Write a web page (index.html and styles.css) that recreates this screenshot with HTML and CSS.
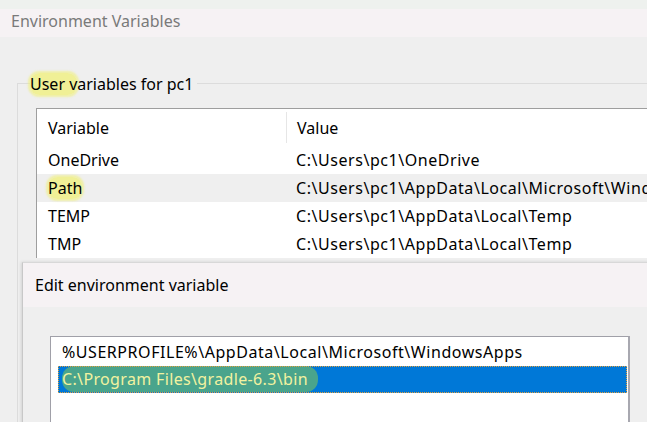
FILE: index.html
```html
<!DOCTYPE html>
<html>
<head>
<meta charset="utf-8">
<link rel="stylesheet" href="styles.css">
</head>
<body>
<div class="desk">
  <div class="win main">
    <div class="strip"></div>
    <div class="titlebar"><span class="title">Environment Variables</span></div>
    <div class="body">
      <fieldset class="group">
        <legend class="legend"><span class="hl-y">User v</span>ariables for pc1</legend>
        <div class="listview">
          <div class="lv-head">
            <div class="c1">Variable</div>
            <div class="c2 sep">Value</div>
          </div>
          <div class="lv-row"><div class="c1">OneDrive</div><div class="c2 path">C:\Users\pc1\OneDrive</div></div>
          <div class="lv-row sel"><div class="c1"><span class="hl-y">Path</span></div><div class="c2 path">C:\Users\pc1\AppData\Local\Microsoft\WindowsApps</div></div>
          <div class="lv-row"><div class="c1">TEMP</div><div class="c2 path">C:\Users\pc1\AppData\Local\Temp</div></div>
          <div class="lv-row"><div class="c1">TMP</div><div class="c2 path">C:\Users\pc1\AppData\Local\Temp</div></div>
        </div>
      </fieldset>
    </div>
  </div>

  <div class="win edit">
    <div class="titlebar2"><span class="title2">Edit environment variable</span></div>
    <div class="body2">
      <div class="listbox">
        <div class="lb-item path">%USERPROFILE%\AppData\Local\Microsoft\WindowsApps</div>
        <div class="lb-item active"><span class="hl-g">C:\Program Files\gradle-6.3\bin</span></div>
      </div>
    </div>
  </div>
</div>
</body>
</html>
```
FILE: styles.css
```css
html, body {
  margin: 0;
  padding: 0;
  width: 647px;
  height: 422px;
  overflow: hidden;
  background: #efefef;
  font-family: "Noto Sans", "Open Sans", sans-serif;
  font-size: 16px;
  color: #000;
}
.desk {
  position: relative;
  width: 647px;
  height: 422px;
  overflow: hidden;
}
.win.main {
  width: 700px;
}
.strip {
  height: 9px;
  background: #eef1ee;
}
.titlebar {
  height: 28px;
  background: #f6f2f4;
  display: flex;
  align-items: center;
  padding-left: 11px;
}
.title {
  color: #7a7a7a;
  font-size: 16px;
  position: relative;
  top: -2px;
}
.body {
  padding: 36px 0 0 17px;
}
.group {
  margin: 0;
  padding: 15px 0 0 18px;
  border: none;
  border-top: 1px solid #dcdcdc;
  border-left: 1px solid #dcdcdc;
  min-width: 0;
  height: 400px;
}
.legend {
  padding: 0 4px 0 0;
  margin-left: -6px;
  font-size: 16px;
  line-height: 20px;
  position: relative;
  top: 1px;
}
.hl-y {
  background: rgba(240, 240, 120, 0.75);
  border-radius: 9px;
  box-shadow: 0 0 2px 2px rgba(240, 240, 120, 0.6);
}
.listview {
  background: #fff;
  border-top: 1px solid #9e9e9e;
  border-left: 1px solid #9e9e9e;
  width: 700px;
}
.lv-head, .lv-row {
  display: flex;
  align-items: center;
}
.lv-head {
  height: 37px;
}
.lv-row {
  height: 28px;
}
.lv-row.sel {
  background: #efefef;
}
.c1 {
  width: 238px;
  padding-left: 11px;
  flex: none;
}
.c2 {
  padding-left: 10px;
  white-space: nowrap;
}
.path {
  letter-spacing: 0.55px;
}
.sep {
  align-self: stretch;
  display: flex;
  align-items: center;
  border-left: 1px solid #e6e6e6;
  margin: 3px 0 3px 0;
  padding-left: 10px;
}

.win.edit {
  position: absolute;
  left: 22px;
  top: 262px;
  width: 700px;
  height: 300px;
  border-left: 1px solid #c8c8c8;
  border-top: 1px solid #d8d8d8;
  box-shadow: -1px 0 3px rgba(0,0,0,0.12);
  background: #efefef;
}
.titlebar2 {
  height: 44px;
  background: #f6f2f4;
  display: flex;
  align-items: center;
  padding-left: 12px;
}
.title2 {
  font-size: 16px;
  color: #000;
}
.body2 {
  padding: 29px 0 0 27px;
}
.listbox {
  width: 580px;
  height: 200px;
  background: #fff;
  border: 1px solid #a0a0a8;
  border-right: 2px solid #a8a8b0;
  padding: 2px 0 0 7px;
  box-sizing: border-box;
}
.lb-item {
  height: 27px;
  line-height: 27px;
  padding-left: 4px;
  margin-right: 1px;
  white-space: nowrap;
}
.lb-item.active {
  background: #0078d7;
  color: #f2f2a0;
  outline: 1px dotted #e0a040;
  outline-offset: -1px;
  letter-spacing: 0.35px;
}
.hl-g {
  background: #4aa48c;
  border-radius: 12px;
  padding: 2px 10px 2px 0;
}
```
